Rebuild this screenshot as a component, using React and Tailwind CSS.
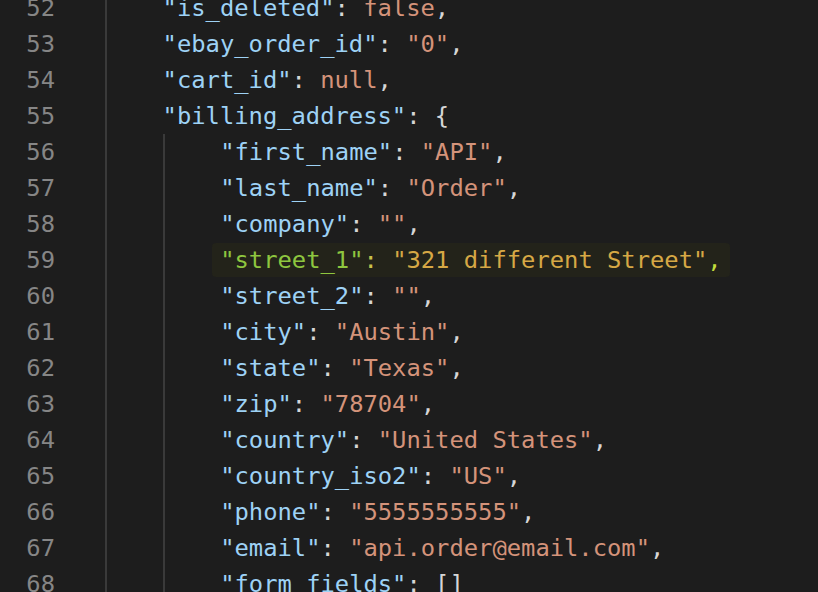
import React from 'react';

// token kinds: k = key, s = string, c = constant, p = punctuation
const lines = [
  { n: 52, indent: 1, t: [['k', '"is_deleted"'], ['p', ': '], ['c', 'false'], ['p', ',']] },
  { n: 53, indent: 1, t: [['k', '"ebay_order_id"'], ['p', ': '], ['s', '"0"'], ['p', ',']] },
  { n: 54, indent: 1, t: [['k', '"cart_id"'], ['p', ': '], ['c', 'null'], ['p', ',']] },
  { n: 55, indent: 1, t: [['k', '"billing_address"'], ['p', ': {']] },
  { n: 56, indent: 2, t: [['k', '"first_name"'], ['p', ': '], ['s', '"API"'], ['p', ',']] },
  { n: 57, indent: 2, t: [['k', '"last_name"'], ['p', ': '], ['s', '"Order"'], ['p', ',']] },
  { n: 58, indent: 2, t: [['k', '"company"'], ['p', ': '], ['s', '""'], ['p', ',']] },
  { n: 59, indent: 2, hl: true, t: [['hk', '"street_1"'], ['hp', ': '], ['hs', '"321 different Street"'], ['hc', ',']] },
  { n: 60, indent: 2, t: [['k', '"street_2"'], ['p', ': '], ['s', '""'], ['p', ',']] },
  { n: 61, indent: 2, t: [['k', '"city"'], ['p', ': '], ['s', '"Austin"'], ['p', ',']] },
  { n: 62, indent: 2, t: [['k', '"state"'], ['p', ': '], ['s', '"Texas"'], ['p', ',']] },
  { n: 63, indent: 2, t: [['k', '"zip"'], ['p', ': '], ['s', '"78704"'], ['p', ',']] },
  { n: 64, indent: 2, t: [['k', '"country"'], ['p', ': '], ['s', '"United States"'], ['p', ',']] },
  { n: 65, indent: 2, t: [['k', '"country_iso2"'], ['p', ': '], ['s', '"US"'], ['p', ',']] },
  { n: 66, indent: 2, t: [['k', '"phone"'], ['p', ': '], ['s', '"5555555555"'], ['p', ',']] },
  { n: 67, indent: 2, t: [['k', '"email"'], ['p', ': '], ['s', '"api.order@email.com"'], ['p', ',']] },
  { n: 68, indent: 2, t: [['k', '"form_fields"'], ['p', ': []']] },
];

const colors = {
  k: 'text-[#9ed2f5]',
  s: 'text-[#d4937a]',
  c: 'text-[#d4937a]',
  p: 'text-[#d6d6d6]',
  hk: 'text-[#8ec63f]',
  hp: 'text-[#c9c24a]',
  hs: 'text-[#d6a845]',
  hc: 'text-[#c2dc3c]',
};

const Guide = () => (
  <span className="inline-block h-[36px] w-[57.6px] shrink-0 border-l-2 border-[#3a3a3a]" />
);

const Line = ({ line }) => (
  <div className="flex h-[36px] items-center">
    <div className="w-[55px] shrink-0 text-right text-[#868686]">{line.n}</div>
    <div className="ml-[50px] flex h-full items-center">
      {Array.from({ length: line.indent }).map((_, i) => (
        <Guide key={i} />
      ))}
      <span
        className={
          line.hl
            ? '-mx-[8px] flex h-[34px] items-center rounded-sm bg-[#23231a] px-[8px]'
            : 'flex items-center'
        }
      >
        {line.t.map(([kind, text], i) => (
          <span key={i} className={colors[kind]}>
            {text}
          </span>
        ))}
      </span>
    </div>
  </div>
);

export default function App() {
  return (
    <div className="h-[592px] w-[818px] overflow-hidden bg-[#1d1d1d] font-['DejaVu_Sans_Mono',monospace] text-[23.8px] leading-[36px] whitespace-pre">
      <div className="-mt-[10px] flex flex-col">
        {lines.map((line) => (
          <Line key={line.n} line={line} />
        ))}
      </div>
    </div>
  );
}
